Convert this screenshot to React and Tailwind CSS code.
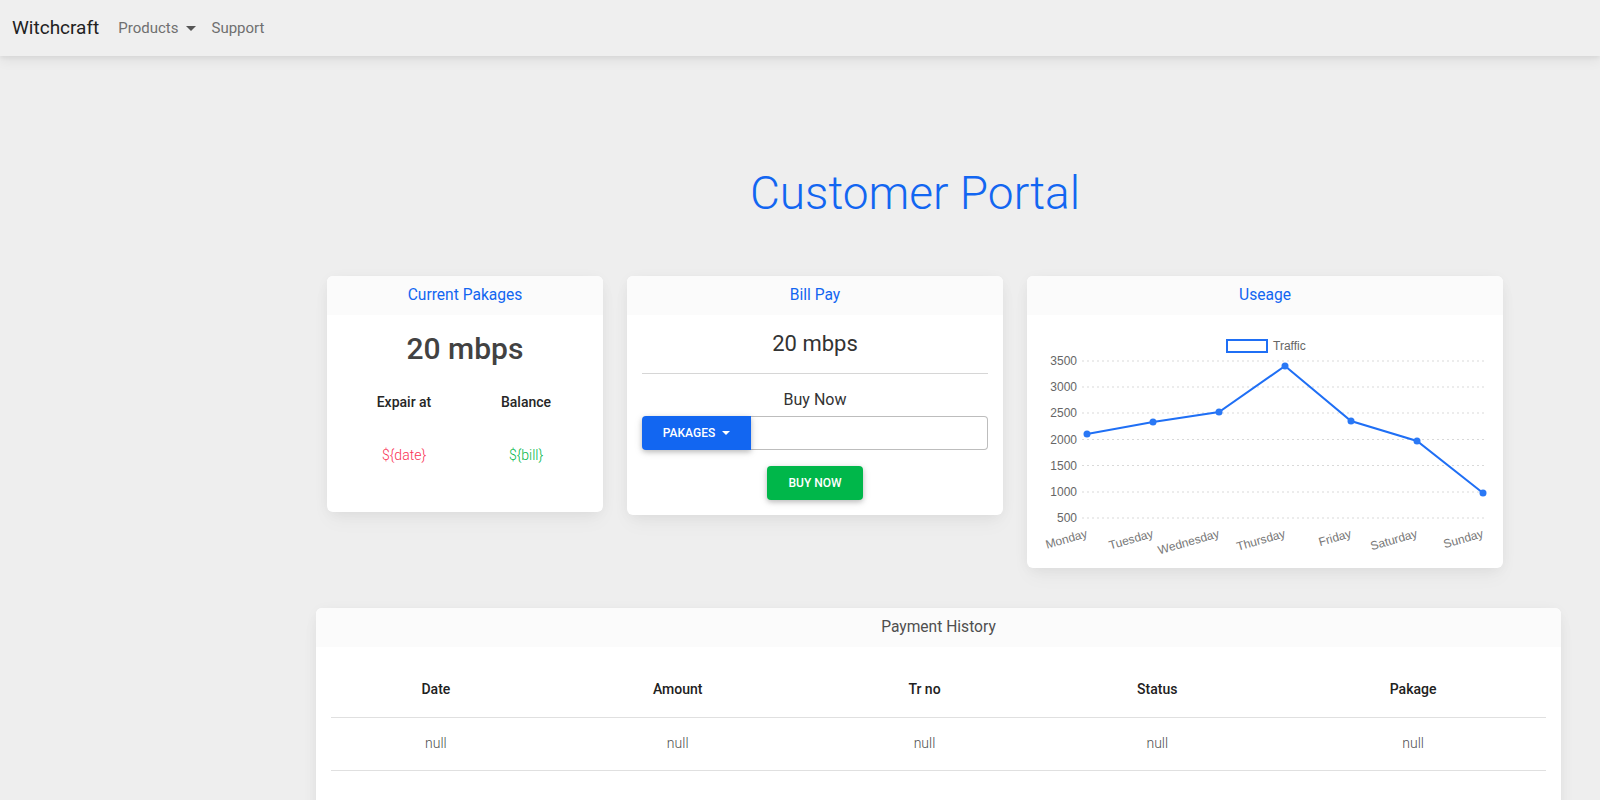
import { useState } from 'react';

const days = ['Monday', 'Tuesday', 'Wednesday', 'Thursday', 'Friday', 'Saturday', 'Sunday'];
const traffic = [119, 107, 97, 51, 106, 126, 178];
const ticks = [
  ['3500', 46], ['3000', 72], ['2500', 98], ['2000', 124.5], ['1500', 150.5], ['1000', 177], ['500', 203],
];

function UsageChart() {
  const pts = traffic.map((y, i) => [60 + i * 66, y]);
  return (
    <svg width="476" height="253" viewBox="0 0 476 253" style={{ fontFamily: '"Liberation Sans", Arial, sans-serif' }}>
      <rect x="200" y="25" width="40" height="12" fill="#fff" stroke="#1f6ff5" strokeWidth="2" />
      <text x="246" y="35" fontSize="12" fill="#666">Traffic</text>
      {ticks.map(([label, y]) => (
        <g key={label}>
          <line x1="55" x2="457" y1={y} y2={y} stroke="#d9d9d9" strokeWidth="1" strokeDasharray="2 3" />
          <text x="50" y={y + 4} fontSize="12" fill="#666" textAnchor="end">{label}</text>
        </g>
      ))}
      <polyline points={pts.map((p) => p.join(',')).join(' ')} fill="none" stroke="#1f6ff5" strokeWidth="2" />
      {pts.map(([x, y]) => (
        <circle key={x} cx={x} cy={y} r="3.5" fill="#2a78f5" />
      ))}
      {days.map((d, i) => (
        <text key={d} fontSize="12" fill="#777" textAnchor="end" transform={`translate(${60 + i * 66 + 1} 222) rotate(-16)`}>
          {d}
        </text>
      ))}
    </svg>
  );
}

function CardHeader({ children, blue = true }) {
  return (
    <div className={`h-[39px] flex items-center justify-center bg-[#fbfbfb] rounded-t-md text-[15.6px] ${blue ? 'text-[#1266f1]' : 'text-[#4f4f4f]'}`}>
      {children}
    </div>
  );
}

const cardCls = 'bg-white rounded-md shadow-[0_2px_15px_-3px_rgba(0,0,0,0.07),0_10px_20px_-2px_rgba(0,0,0,0.04)]';

function App() {
  const [amount, setAmount] = useState('');
  const cols = [
    ['Date', 'w-[210px]'],
    ['Amount', 'w-[274px]'],
    ['Tr no', 'w-[220px]'],
    ['Status', 'w-[246px]'],
    ['Pakage', 'w-[266px]'],
  ];

  return (
    <div className="min-h-screen bg-[#eeeeee] font-['Roboto',sans-serif] text-[#4f4f4f]">
      <nav className="h-[56px] bg-[#efefef] flex items-center pl-3 shadow-[0_4px_12px_0_rgba(0,0,0,0.07),0_2px_4px_rgba(0,0,0,0.05)]">
        <span className="text-[19px] text-[#212121] mr-[19px]">Witchcraft</span>
        <span className="text-[15px] text-[#6f6f6f] flex items-center">
          Products
          <span className="ml-[8px] w-0 h-0 border-x-[5px] border-x-transparent border-t-[5px] border-t-[#555]"></span>
        </span>
        <span className="text-[15px] text-[#6f6f6f] ml-[15px]">Support</span>
      </nav>

      <h1 className="mt-[109px] text-center pl-[230px] text-[46px] leading-[56px] font-light text-[#1266f1]">Customer Portal</h1>

      <div className="mt-[55px] ml-[327px] flex items-start gap-6">
        <div className={`${cardCls} w-[276px]`}>
          <CardHeader>Current Pakages</CardHeader>
          <div className="px-4 pt-[15px] pb-[47px] text-center">
            <div className="text-[30px] leading-[38px] font-medium text-[#424242]">20 mbps</div>
            <div className="grid grid-cols-2 mt-[24px] text-[14px] leading-[20px] font-medium text-[#262626]">
              <span>Expair at</span>
              <span>Balance</span>
            </div>
            <div className="grid grid-cols-2 mt-[33px] text-[14px] leading-[20px] font-light">
              <span className="text-[#f93154]">{'${date}'}</span>
              <span className="text-[#00b74a]">{'${bill}'}</span>
            </div>
          </div>
        </div>

        <div className={`${cardCls} w-[376px]`}>
          <CardHeader>Bill Pay</CardHeader>
          <div className="px-[15px] pt-[14px] pb-[15px] text-center">
            <div className="text-[22px] leading-[29px] text-[#333]">20 mbps</div>
            <hr className="mt-[15px] border-t border-[#d6d6d6]" />
            <div className="mt-[14px] text-[16px] leading-[24px] text-[#333]">Buy Now</div>
            <div className="mt-[4px] flex h-[34px]">
              <button className="w-[109px] h-full bg-[#1266f1] text-white text-[12px] font-medium uppercase rounded-l-[4px] flex items-center justify-center gap-[7px] shadow-[0_2px_5px_0_rgba(0,0,0,0.2),0_2px_10px_0_rgba(0,0,0,0.1)] relative z-10">
                Pakages
                <span className="w-0 h-0 border-x-[4px] border-x-transparent border-t-[4px] border-t-white"></span>
              </button>
              <input
                value={amount}
                onChange={(e) => setAmount(e.target.value)}
                className="flex-1 h-full border border-[#bdbdbd] border-l-0 rounded-r-[4px] px-3 outline-none text-[14px]"
              />
            </div>
            <button className="mt-[16px] w-[96px] h-[34px] bg-[#00b74a] text-white text-[12px] font-medium uppercase rounded-[4px] shadow-[0_2px_5px_0_rgba(0,0,0,0.2),0_2px_10px_0_rgba(0,0,0,0.1)]">
              Buy Now
            </button>
          </div>
        </div>

        <div className={`${cardCls} w-[476px]`}>
          <CardHeader>Useage</CardHeader>
          <UsageChart />
        </div>
      </div>

      <div className={`${cardCls} mt-[40px] ml-[316px] w-[1245px]`}>
        <CardHeader blue={false}>Payment History</CardHeader>
        <div className="px-[15px] pt-4 pb-12">
          <table className="w-full text-center text-[14px] border-collapse">
            <thead>
              <tr className="h-[54px] border-b border-[#e0e0e0]">
                {cols.map(([c, w]) => (
                  <th key={c} className={`${w} font-medium text-[#212121]`}>{c}</th>
                ))}
              </tr>
            </thead>
            <tbody>
              <tr className="h-[53px] border-b border-[#e0e0e0]">
                {cols.map(([c]) => (
                  <td key={c} className="font-light text-[#4f4f4f]">null</td>
                ))}
              </tr>
            </tbody>
          </table>
        </div>
      </div>
    </div>
  );
}

export default App;
